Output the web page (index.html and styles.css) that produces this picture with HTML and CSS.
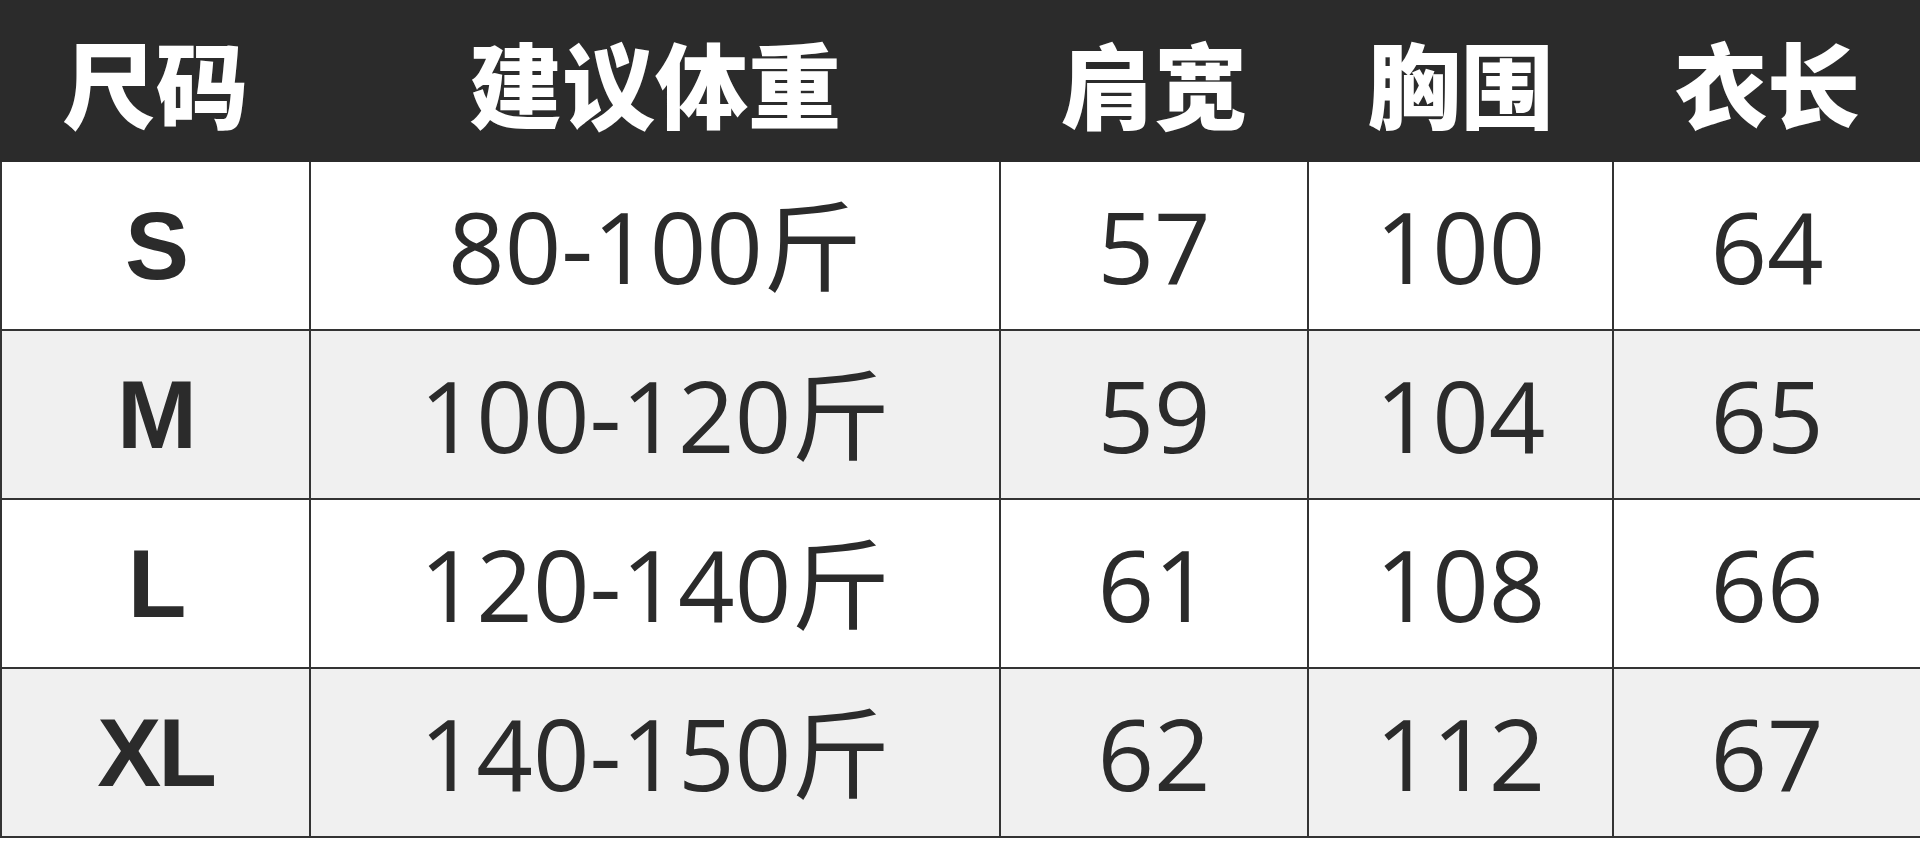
FILE: index.html
```html
<!DOCTYPE html>
<html lang="zh-CN">
<head>
<meta charset="utf-8">
<title>尺码表</title>
<link rel="stylesheet" href="styles.css">
</head>
<body>
<table class="size-table">
  <colgroup>
    <col class="c-size">
    <col class="c-weight">
    <col class="c-shoulder">
    <col class="c-chest">
    <col class="c-length">
  </colgroup>
  <thead>
    <tr class="head-row">
      <th>尺码</th>
      <th>建议体重</th>
      <th>肩宽</th>
      <th>胸围</th>
      <th>衣长</th>
    </tr>
  </thead>
  <tbody>
    <tr class="row-light">
      <td class="size">S</td>
      <td>80-100斤</td>
      <td>57</td>
      <td>100</td>
      <td>64</td>
    </tr>
    <tr class="row-grey">
      <td class="size">M</td>
      <td>100-120斤</td>
      <td>59</td>
      <td>104</td>
      <td>65</td>
    </tr>
    <tr class="row-light">
      <td class="size">L</td>
      <td>120-140斤</td>
      <td>61</td>
      <td>108</td>
      <td>66</td>
    </tr>
    <tr class="row-grey">
      <td class="size">XL</td>
      <td>140-150斤</td>
      <td>62</td>
      <td>112</td>
      <td>67</td>
    </tr>
  </tbody>
</table>
</body>
</html>
```
FILE: styles.css
```css
html, body {
  margin: 0;
  padding: 0;
  background: #ffffff;
}

.size-table {
  width: 1920px;
  table-layout: fixed;
  border-collapse: collapse;
  color: #2b2b2b;
}

.c-size { width: 309px; }
.c-weight { width: 690px; }
.c-shoulder { width: 308px; }
.c-chest { width: 305px; }
.c-length { width: 308px; }

.head-row th {
  height: 160px;
  padding: 0;
  box-sizing: border-box;
  background: #2b2b2b;
  color: #ffffff;
  font-family: "Noto Sans CJK SC", "Noto Sans", sans-serif;
  font-weight: 900;
  font-size: 93px;
  line-height: 1;
  text-align: center;
  vertical-align: middle;
  border: 2px solid #2b2b2b;
}

tbody td {
  height: 169px;
  padding: 0;
  box-sizing: border-box;
  border: 2px solid #333333;
  text-align: center;
  vertical-align: middle;
  font-family: "Open Sans", "Noto Sans CJK SC", sans-serif;
  font-weight: 400;
  font-size: 99px;
  line-height: 1;
}

tbody td.size {
  font-family: "Liberation Sans", Arial, sans-serif;
  font-weight: 700;
  font-size: 96px;
  letter-spacing: -3px;
}

.row-light td { background: #ffffff; }
.row-grey td { background: #f0f0f0; }
```
